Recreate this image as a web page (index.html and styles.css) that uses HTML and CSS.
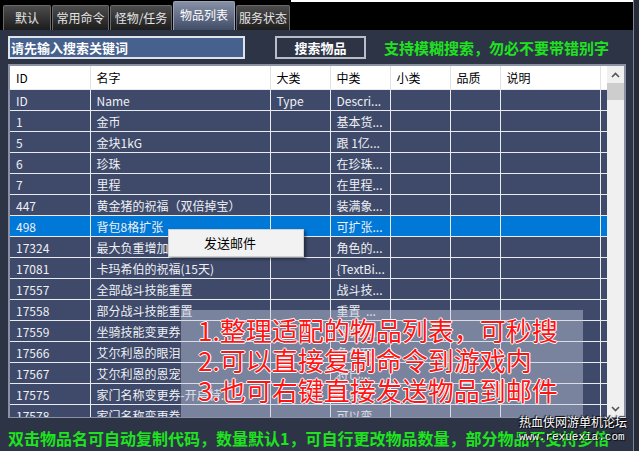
FILE: index.html
```html
<!DOCTYPE html>
<html lang="zh-CN">
<head>
    <meta charset="UTF-8">
    <title>物品列表</title>
    <link rel="stylesheet" href="styles.css">
</head>
<body>
    <div class="window">
        <div class="tabbar">
            <div class="tab t1">默认</div>
            <div class="tab t2">常用命令</div>
            <div class="tab t3">怪物/任务</div>
            <div class="tab t4 active">物品列表</div>
            <div class="tab t5">服务状态</div>
            <div class="tab-fill"></div>
        </div>

        <div class="panel">
            <div class="search-row">
                <div class="search-input">请先输入搜索关键词</div>
                <button class="search-btn">搜索物品</button>
                <div class="tip">支持模糊搜索，勿必不要带错别字</div>
            </div>

            <div class="grid">
                <div class="grid-body">
                    <table class="items">
                        <colgroup>
                            <col class="c-id"><col class="c-name"><col class="c-sm"><col class="c-sm"><col class="c-sm"><col class="c-q"><col class="c-desc"><col class="c-end">
                        </colgroup>
                        <thead>
                            <tr><th>ID</th><th>名字</th><th>大类</th><th>中类</th><th>小类</th><th>品质</th><th>说明</th><th></th></tr>
                        </thead>
                        <tbody>
                            <tr><td>ID</td><td>Name</td><td>Type</td><td>Descri...</td><td></td><td></td><td></td><td></td></tr>
                            <tr><td>1</td><td>金币</td><td></td><td>基本货...</td><td></td><td></td><td></td><td></td></tr>
                            <tr><td>5</td><td>金块1kG</td><td></td><td>跟 1亿...</td><td></td><td></td><td></td><td></td></tr>
                            <tr><td>6</td><td>珍珠</td><td></td><td>在珍珠...</td><td></td><td></td><td></td><td></td></tr>
                            <tr><td>7</td><td>里程</td><td></td><td>在里程...</td><td></td><td></td><td></td><td></td></tr>
                            <tr><td>447</td><td>黄金猪的祝福（双倍掉宝）</td><td></td><td>装满象...</td><td></td><td></td><td></td><td></td></tr>
                            <tr class="selected"><td>498</td><td>背包8格扩张</td><td></td><td>可扩张...</td><td></td><td></td><td></td><td></td></tr>
                            <tr><td>17324</td><td>最大负重增加</td><td></td><td>角色的...</td><td></td><td></td><td></td><td></td></tr>
                            <tr><td>17081</td><td>卡玛希伯的祝福(15天)</td><td></td><td>{TextBi...</td><td></td><td></td><td></td><td></td></tr>
                            <tr><td>17557</td><td>全部战斗技能重置</td><td></td><td>战斗技...</td><td></td><td></td><td></td><td></td></tr>
                            <tr><td>17558</td><td>部分战斗技能重置</td><td></td><td>重置&nbsp;&nbsp;...</td><td></td><td></td><td></td><td></td></tr>
                            <tr><td>17559</td><td>坐骑技能变更券</td><td></td><td>坐骑技...</td><td></td><td></td><td></td><td></td></tr>
                            <tr><td>17566</td><td>艾尔利恩的眼泪</td><td></td><td>角色死...</td><td></td><td></td><td></td><td></td></tr>
                            <tr><td>17567</td><td>艾尔利恩的恩宠</td><td></td><td>将已...</td><td></td><td></td><td></td><td></td></tr>
                            <tr><td>17575</td><td>家门名称变更券-开启特...</td><td></td><td>可以变...</td><td></td><td></td><td></td><td></td></tr>
                            <tr><td>17578</td><td>家门名称变更券</td><td></td><td>可以变...</td><td></td><td></td><td></td><td></td></tr>
                        </tbody>
                    </table>
                </div>
                <div class="scrollbar">
                    <div class="arrow">
                        <svg width="9" height="6" viewBox="0 0 9 6"><path d="M1 5 L4.5 1.5 L8 5" fill="none" stroke="#555" stroke-width="1.6"/></svg>
                    </div>
                    <div class="track"><div class="thumb"></div></div>
                    <div class="arrow">
                        <svg width="9" height="6" viewBox="0 0 9 6"><path d="M1 1 L4.5 4.5 L8 1" fill="none" stroke="#555" stroke-width="1.6"/></svg>
                    </div>
                </div>

                <div class="context-menu">发送邮件</div>

                <div class="note">
                    <p>1.整理适配的物品列表，可秒搜</p>
                    <p>2.可以直接复制命令到游戏内</p>
                    <p>3.也可右键直接发送物品到邮件</p>
                </div>
            </div>

            <div class="footer-tip">双击物品名可自动复制代码，数量默认1，可自行更改物品数量，部分物品不支持多倍</div>
        </div>
    </div>

    <div class="watermark">
        <div class="wm-title">热血侠网游单机论坛</div>
        <div class="wm-url">www.rexuexia.com</div>
    </div>
</body>
</html>
```

FILE: styles.css
```css
/* General */
body {
    margin: 0;
    width: 639px;
    height: 451px;
    overflow: hidden;
    background-color: #262b3a;
    font-family: "Noto Sans CJK SC", "Noto Sans", sans-serif;
    color: #fff;
    position: relative;
}

.window {
    width: 633px;
    height: 451px;
    display: flex;
    flex-direction: column;
    border-right: 1px solid #7d8498;
}

/* Tabs */
.tabbar {
    height: 30px;
    background-color: #000;
    display: flex;
    align-items: flex-end;
    padding-left: 3px;
    gap: 1px;
    box-sizing: border-box;
}

.tab {
    height: 25px;
    font-size: 12px;
    line-height: 24px;
    text-align: center;
    color: #e4e4e4;
    background: linear-gradient(#4c4c4c, #1c1c1c);
    border: 1px solid #6a6a6a;
    border-bottom: none;
    border-radius: 2px 2px 0 0;
    box-sizing: border-box;
}

.t1 { width: 48px; }
.t2 { width: 57px; }
.t3 { width: 62px; }
.t4 { width: 62px; }
.t5 { width: 54px; }

.tab.active {
    height: 29px;
    line-height: 26px;
    color: #fff;
    background: linear-gradient(#8690a6, #414c68);
    border-color: #9aa2b6;
}

.tab-fill {
    flex: 1;
    align-self: stretch;
    border-top: 2px solid #fff;
}

/* Panel */
.panel {
    flex: 1;
    background-color: #2d3446;
    display: flex;
    flex-direction: column;
    padding: 6px 0 0 8px;
}

.search-row {
    display: flex;
    align-items: center;
    height: 23px;
}

.search-input {
    width: 237px;
    height: 23px;
    box-sizing: border-box;
    background-color: #46618e;
    border: 2px solid #dfe3ea;
    font-size: 13px;
    font-weight: bold;
    line-height: 19px;
    padding-left: 1px;
}

.search-btn {
    margin-left: 30px;
    width: 91px;
    height: 23px;
    background-color: #2d3446;
    border: 2px solid #b9bdc7;
    color: #fff;
    font-family: inherit;
    font-size: 13px;
    font-weight: bold;
    padding: 0;
}

.tip {
    margin-left: 18px;
    color: #1ee31e;
    font-size: 15px;
    font-weight: bold;
}

/* Grid */
.grid {
    position: relative;
    margin-top: 5px;
    width: 618px;
    height: 354px;
    box-sizing: border-box;
    border: 2px solid #8a91a5;
    border-bottom-width: 1px;
    display: flex;
}

.grid-body {
    width: 598px;
    overflow: hidden;
    background-color: #2d3446;
}

.items {
    width: 598px;
    table-layout: fixed;
    border-collapse: collapse;
    font-size: 12px;
}

.c-id { width: 80px; }
.c-name { width: 180px; }
.c-sm { width: 60px; }
.c-q { width: 50px; }
.c-desc { width: 100px; }
.c-end { width: 8px; }

.items th {
    height: 23px;
    padding: 0 0 0 6px;
    background-color: #fff;
    color: #000;
    font-weight: normal;
    text-align: left;
    border-right: 1px solid #e2e2e2;
}

.items td {
    height: 20px;
    padding: 0 0 0 6px;
    background-color: #3f4a6a;
    color: #eef0f4;
    border: 1px solid #e8ebf0;
    white-space: nowrap;
    overflow: hidden;
}

.items td:first-child {
    border-left: none;
}

.items tr.selected td {
    background-color: #0078d7;
}

/* Scrollbar */
.scrollbar {
    width: 17px;
    background-color: #f0f0f0;
    display: flex;
    flex-direction: column;
}

.arrow {
    height: 17px;
    display: flex;
    align-items: center;
    justify-content: center;
}

.track {
    flex: 1;
}

.thumb {
    height: 17px;
    background-color: #cdcdcd;
}

/* Context menu */
.context-menu {
    position: absolute;
    left: 158px;
    top: 163px;
    width: 136px;
    height: 28px;
    box-sizing: border-box;
    padding-left: 35px;
    background-color: #f2f2f2;
    border: 1px solid #cfcfcf;
    box-shadow: 2px 2px 3px rgba(0, 0, 0, 0.45);
    color: #000;
    font-size: 13px;
    line-height: 26px;
}

/* Overlay note */
.note {
    position: absolute;
    left: 171px;
    top: 244px;
    width: 402px;
    bottom: 0;
    padding: 5px 0 0 17px;
    box-sizing: border-box;
    background-color: rgba(196, 202, 220, 0.45);
}

.note p {
    margin: 0;
    font-size: 26px;
    line-height: 30px;
    color: #ff1414;
    white-space: nowrap;
    text-shadow: 1px 0 0 #fff, -1px 0 0 #fff, 0 1px 0 #fff, 0 -1px 0 #fff;
}

/* Footer */
.footer-tip {
    padding-top: 8px;
    color: #1ee31e;
    font-size: 16px;
    font-weight: bold;
    white-space: nowrap;
}

/* Watermark */
.watermark {
    position: absolute;
    left: 519px;
    top: 414px;
    color: #fff;
    white-space: nowrap;
    text-shadow: 1px 1px 1px #000, -1px -1px 1px #000;
}

.wm-title {
    font-size: 12px;
    line-height: 16px;
}

.wm-url {
    font-family: "Liberation Mono", monospace;
    font-size: 11px;
    line-height: 14px;
}
```
